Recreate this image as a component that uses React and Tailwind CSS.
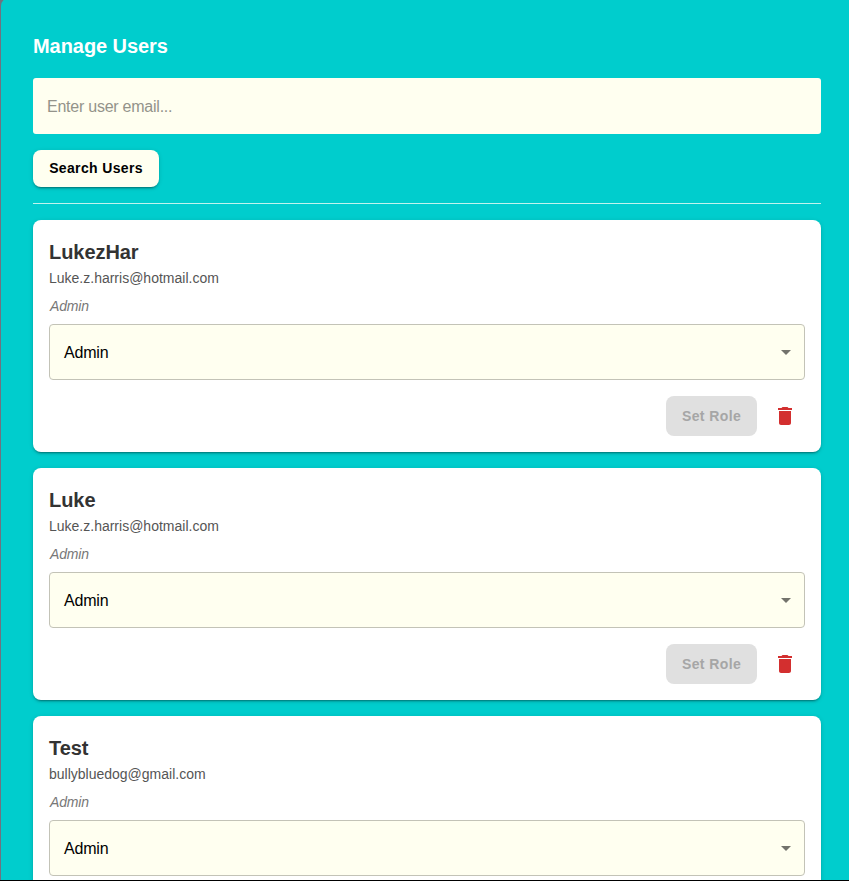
const users = [
  { name: 'LukezHar', email: 'Luke.z.harris@hotmail.com', role: 'Admin', actions: true },
  { name: 'Luke', email: 'Luke.z.harris@hotmail.com', role: 'Admin', actions: true },
  { name: 'Test', email: 'bullybluedog@gmail.com', role: 'Admin', actions: false },
];

function UserCard({ user }) {
  return (
    <article className="h-[232px] shrink-0 rounded-lg bg-white p-4 shadow-[0px_3px_1px_-2px_rgba(0,0,0,0.2),0px_2px_2px_0px_rgba(0,0,0,0.14),0px_1px_5px_0px_rgba(0,0,0,0.12)]">
      <h2 className="text-xl leading-8 font-bold tracking-[-0.06px] text-[#333]">{user.name}</h2>
      <p className="text-sm leading-5 text-[#555]">{user.email}</p>
      <p className="mt-2 pl-px text-sm leading-5 tracking-[-0.15px] text-[#777] italic">{user.role}</p>
      <div className="mt-2 flex h-14 items-center justify-between rounded border border-[#c3c3b7] bg-[#fffff0] pr-[6px] pl-[14px] text-base tracking-[-0.2px] text-black">
        <span className="pt-0.5">{user.role}</span>
        <svg className="size-6" viewBox="0 0 24 24" fill="#73736c">
          <path d="M7 10l5 5 5-5z" />
        </svg>
      </div>
      {user.actions && (
        <div className="mt-4 flex items-center justify-end gap-2">
          <button disabled className="h-10 w-[91px] rounded-lg bg-[#e0e0e0] text-sm font-bold tracking-[0.4px] text-[#a6a6a6]">
            Set Role
          </button>
          <button aria-label="Delete user" className="flex size-10 items-center justify-center">
            <svg className="size-6" viewBox="0 0 24 24" fill="#d32f2f">
              <path d="M6 19c0 1.1.9 2 2 2h8c1.1 0 2-.9 2-2V7H6zM19 4h-3.5l-1-1h-5l-1 1H5v2h14z" />
            </svg>
          </button>
        </div>
      )}
    </article>
  );
}

export default function App() {
  return (
    <div className="h-[881px] overflow-hidden border-b border-black bg-[#6f7380] pl-px font-['Liberation_Sans',Arial,sans-serif]">
      <main className="-mt-0.5 flex h-[900px] flex-col rounded-tl-lg bg-[#00cdcd] pt-8 pr-7 pl-8">
        <h1 className="text-xl leading-8 font-bold tracking-[-0.06px] text-white">Manage Users</h1>
        <input
          placeholder="Enter user email..."
          className="mt-4 h-14 w-full shrink-0 rounded-[3px] bg-[#fffff0] px-[14px] pt-0.5 text-base tracking-[-0.24px] placeholder:text-[#93938a]"
        />
        <button className="mt-4 h-[36.5px] w-[126px] shrink-0 rounded-lg bg-[#fffff0] text-sm font-bold tracking-[0.35px] text-black shadow-[0px_3px_1px_-2px_rgba(0,0,0,0.2),0px_2px_2px_0px_rgba(0,0,0,0.14),0px_1px_5px_0px_rgba(0,0,0,0.12)]">
          Search Users
        </button>
        <hr className="mt-[16.5px] border-t border-[#c0f3ee]" />
        <section className="mt-4 flex flex-col gap-4">
          {users.map((user) => (
            <UserCard key={user.name} user={user} />
          ))}
        </section>
      </main>
    </div>
  );
}
